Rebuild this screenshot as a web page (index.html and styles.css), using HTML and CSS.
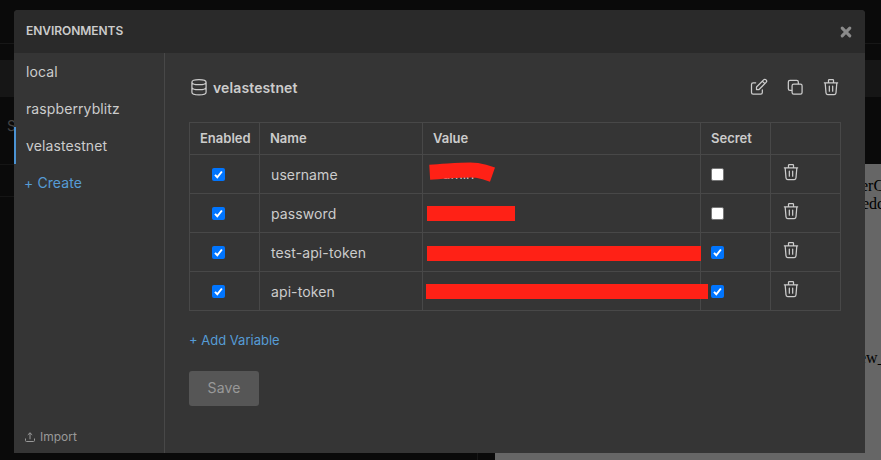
FILE: index.html
```html
<!DOCTYPE html>
<html lang="en">
<head>
<meta charset="utf-8">
<title>Environments</title>
<link rel="stylesheet" href="styles.css">
</head>
<body>
<svg class="defs" width="0" height="0" aria-hidden="true">
  <symbol id="trash" viewBox="0 0 24 24"><path d="M4 7h16M10 11v6M14 11v6M5 7l1 12a2 2 0 0 0 2 2h8a2 2 0 0 0 2-2l1-12M9 7V4a1 1 0 0 1 1-1h4a1 1 0 0 1 1 1v3"/></symbol>
  <symbol id="check" viewBox="0 0 13 13"><path d="M3 6.9l2.3 2.4L9.9 3.5"/></symbol>
</svg>
<div class="app">
  <div class="app-top"></div>
  <div class="app-tabs"></div>
  <div class="app-bar"></div>
  <div class="app-body">
    <div class="app-request"><div class="app-url">S</div><div class="app-row"></div><div class="app-rest"></div></div>
    <div class="app-response">
      <span class="snippet snippet-a">erC</span>
      <span class="snippet snippet-b">edc</span>
      <span class="snippet snippet-c">ew_</span>
    </div>
  </div>
</div>
<div class="modal">
  <header class="modal-header"><h1>ENVIRONMENTS</h1>
    <svg class="close" viewBox="0 0 12 12"><path d="M2.2 2.2l7.6 7.6M9.8 2.2L2.2 9.8"/></svg>
  </header>
  <div class="modal-body">
    <nav class="sidebar">
      <a class="env">local</a>
      <a class="env">raspberryblitz</a>
      <a class="env active">velastestnet</a>
      <a class="create">+ Create</a>
      <a class="import"><svg class="upload" viewBox="0 0 12 12"><path d="M1.5 7.5v2q0 1 1 1h7q1 0 1-1v-2M6 8.3V1.8M3.8 3.9L6 1.8l2.2 2.1"/></svg><span>Import</span></a>
    </nav>
    <main class="content">
      <div class="title">
        <svg class="icon" viewBox="0 0 24 24"><path d="M3.5 6.2c0-1.8 2.6-3.2 8.5-3.2s8.5 1.4 8.5 3.2-2.6 3-8.5 3-8.5-1.2-8.5-3v12c0 1.8 2.6 3.2 8.5 3.2s8.5-1.4 8.5-3.2v-12M3.5 12.2c0 1.8 2.6 3 8.5 3s8.5-1.2 8.5-3"/></svg>
        <h2>velastestnet</h2>
        <div class="actions">
          <svg class="icon" viewBox="0 0 24 24"><path d="M8 7H5a2 2 0 0 0-2 2v9.500a2 2 0 0 0 2 2h9a2 2 0 0 0 2-2v-3"/><path d="M9 15h3l8.500-8.500a1.500 1.500 0 0 0-3-3L9 12v3M16 5l3 3"/></svg>
          <svg class="icon" viewBox="0 0 24 24"><rect x="8.500" y="8.500" width="12" height="12" rx="2"/><path d="M16 8V6a2 2 0 0 0-2-2H6a2 2 0 0 0-2 2v8a2 2 0 0 0 2 2h2"/></svg>
          <svg class="icon"><use href="#trash"/></svg>
        </div>
      </div>
      <div class="table">
        <div class="row head"><div>Enabled</div><div>Name</div><div>Value</div><div>Secret</div><div></div></div>
        <div class="row">
          <div class="enabled"><svg class="box on"><use href="#check"/></svg></div><div class="name">username</div>
          <div class="value"><span class="plain">admin</span><svg class="scribble" viewBox="0 0 68 22"><path d="M.7 11.2C28 9.600 40 8.200 48 9.400Q55 10.600 63.500 13.600"/></svg></div>
          <div class="secret"><span class="box off"></span></div><div class="remove"><svg class="icon"><use href="#trash"/></svg></div>
        </div>
        <div class="row">
          <div class="enabled"><svg class="box on"><use href="#check"/></svg></div><div class="name">password</div>
          <div class="value"><span class="redact redact-short"></span></div>
          <div class="secret"><span class="box off"></span></div><div class="remove"><svg class="icon"><use href="#trash"/></svg></div>
        </div>
        <div class="row">
          <div class="enabled"><svg class="box on"><use href="#check"/></svg></div><div class="name">test-api-token</div>
          <div class="value"><span class="redact redact-long"></span></div>
          <div class="secret"><svg class="box on"><use href="#check"/></svg></div><div class="remove"><svg class="icon"><use href="#trash"/></svg></div>
        </div>
        <div class="row">
          <div class="enabled"><svg class="box on"><use href="#check"/></svg></div><div class="name">api-token</div>
          <div class="value"><span class="redact redact-full"></span></div>
          <div class="secret"><svg class="box on"><use href="#check"/></svg></div><div class="remove"><svg class="icon"><use href="#trash"/></svg></div>
        </div>
      </div>
      <a class="add">+ Add Variable</a>
      <button class="save">Save</button>
    </main>
  </div>
</div>
</body>
</html>
```
FILE: styles.css
```css
* { box-sizing: border-box; }
body { margin: 0; width: 881px; height: 460px; overflow: hidden; position: relative; background: #0a0a0a; color: #ccc; font-family: Inter, sans-serif; font-size: 14px; }
h1, h2 { margin: 0; }
.defs { position: absolute; }

.app { height: 460px; display: flex; flex-direction: column; }
.app-top { height: 44px; border-bottom: 1px solid #171717; }
.app-tabs { height: 16px; }
.app-bar { height: 37px; background: #161616; }
.app-body { flex: 1; display: flex; }
.app-request { width: 478px; border-right: 1px solid #171717; }
.app-url { height: 68px; padding: 20px 0 0 7px; border-bottom: 1px solid #151515; color: #444; line-height: 18px; }
.app-row { height: 32px; border-bottom: 1px solid #151515; }
.app-response { position: relative; flex: 1; margin: 67px 0 0 17px; background: #666; color: #000; font: 16px/18px "Liberation Serif", serif; overflow: hidden; }
.snippet { position: absolute; }
.snippet-a { left: 366px; top: 13px; }
.snippet-b { left: 367px; top: 31px; }
.snippet-c { left: 364px; top: 185px; }

.modal { position: absolute; left: 14px; top: 10px; width: 851px; height: 443px; background: #353535; border-radius: 4px 4px 0 0; overflow: hidden; display: flex; flex-direction: column; }
.modal-header { height: 43px; background: #2a2a2a; padding: 0 13px 0 12px; display: flex; align-items: center; justify-content: space-between; }
.modal-header h1 { font-size: 12px; font-weight: 600; line-height: 16px; padding-bottom: 1px; letter-spacing: -0.05px; }
.close { width: 12px; height: 12px; fill: none; stroke: #8a8a8a; stroke-width: 3.1; stroke-linecap: round; }
.modal-body { flex: 1; display: flex; }

.sidebar { width: 151px; border-right: 1px solid #484848; display: flex; flex-direction: column; }
.env, .create { height: 37px; line-height: 37px; padding-left: 12px; letter-spacing: 0.1px; }
.env { border-left: 0 solid #4b93d3; }
.env.active { border-left-width: 2px; padding-left: 10px; }
.create { padding-left: 10px; color: #569cd6; }
.import { margin-top: auto; padding: 0 0 8px 10px; display: flex; align-items: center; gap: 4px; color: #999; font-size: 12px; line-height: 16px; }
.upload { width: 12px; height: 12px; fill: none; stroke: #999; stroke-width: 1; }

.content { flex: 1; padding: 24px 24px 0 24px; display: flex; flex-direction: column; align-items: flex-start; }
.title { width: 652px; height: 20px; display: flex; align-items: center; }
.title h2 { font-size: 14px; font-weight: 600; line-height: 20px; margin-left: 4px; padding-top: 1px; letter-spacing: 0.12px; }
.icon { display: block; width: 20px; height: 20px; fill: none; stroke: #ccc; stroke-width: 1.5; stroke-linecap: round; stroke-linejoin: round; }
.actions { display: flex; gap: 16px; margin-left: auto; }

.table { width: 652px; margin-top: 25px; border-bottom: 1px solid #484848; }
.row { display: grid; grid-template-columns: 70px 163px 278px 70px 71px; height: 39px; border-top: 1px solid #484848; }
.row > div { display: flex; align-items: center; border-left: 1px solid #484848; position: relative; }
.row > div:last-child { border-right: 1px solid #484848; }
.row.head { height: 32px; font-size: 13px; font-weight: 600; }
.row.head > div { padding: 0 0 1px 10px; }
.row .enabled { padding-left: 22px; }
.row .name { padding: 1px 0 0 11px; letter-spacing: 0.1px; }
.row .value { padding-left: 4px; }
.row .secret { padding-left: 10px; }
.row .remove { padding: 0 0 5px 10px; }
.box { display: block; width: 13px; height: 13px; border-radius: 2px; }
.on { background: #0075ff; fill: none; stroke: #fff; stroke-width: 2; margin-top: 1px; }
.off { background: #fff; border: 1px solid #767676; margin-top: 1px; }
.plain { margin: 0 0 1px 7px; }
.scribble { position: absolute; left: 6px; top: 5.5px; width: 68px; height: 22px; overflow: visible; fill: none; stroke: #ff2116; stroke-width: 15; }
.redact { height: 15px; background: #ff2116; flex: none; position: relative; z-index: 1; }
.redact-short { width: 88px; margin-top: 1px; }
.redact-long { width: 274px; margin-top: 2px; }
.redact-full { width: 282px; margin-left: -1px; }

.add { margin-top: 20px; font-size: 13px; line-height: 18px; color: #569cd6; }
.save { margin-top: 21px; width: 70px; height: 35px; border: 0; border-radius: 3px; padding: 0 0 1px; background: #565656; color: #999; font: 14px/20px Inter, sans-serif; letter-spacing: 0.1px; transform: translateY(1px); }
```
